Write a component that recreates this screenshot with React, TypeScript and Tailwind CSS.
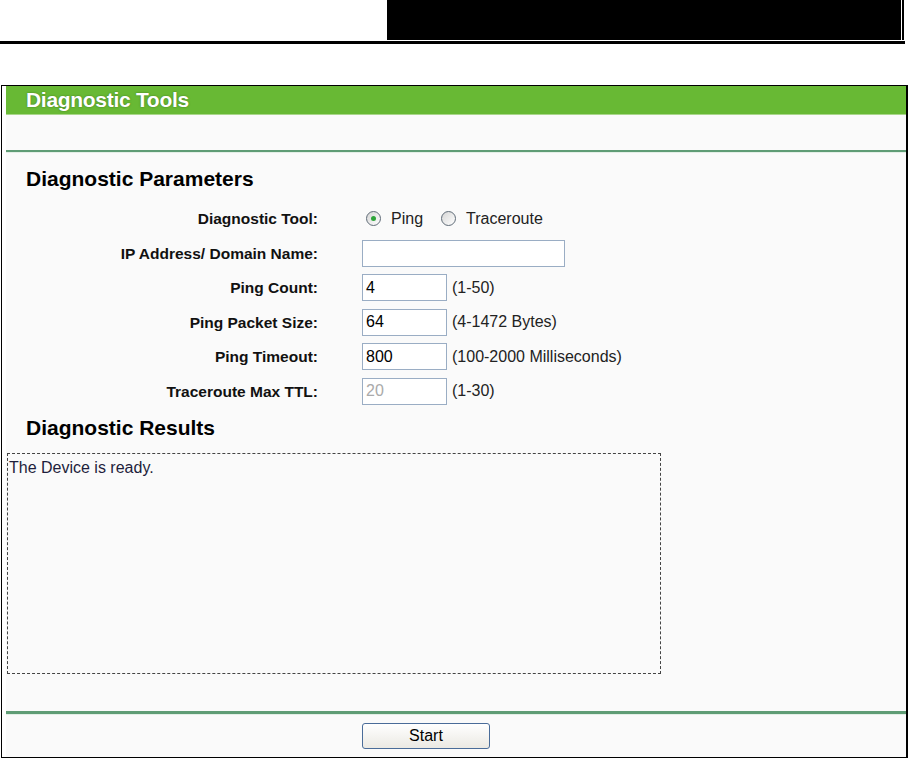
import React from "react";

const font = { fontFamily: '"Liberation Sans", Arial, sans-serif' };

function Radio({ checked, label }: { checked?: boolean; label: string }) {
  return (
    <label className="flex items-center gap-[10px]">
      <span className="w-[15px] h-[15px] rounded-full border border-[#5f6b77] bg-gradient-to-br from-[#d6d6d6] to-[#ffffff] grid place-items-center">
        {checked && <span className="w-[5px] h-[5px] rounded-full bg-[#2ea43a]" />}
      </span>
      <span className="text-[16px] text-[#222]">{label}</span>
    </label>
  );
}

function Field({
  value,
  hint,
  wide,
  disabled,
}: {
  value?: string;
  hint?: string;
  wide?: boolean;
  disabled?: boolean;
}) {
  return (
    <div className="flex items-center gap-[5px]">
      <div
        className={`h-[27px] border border-[#9aadc4] bg-white flex items-center pl-[3px] text-[16px] ${
          wide ? "w-[203px]" : "w-[85px]"
        } ${disabled ? "text-[#aaa]" : "text-black"}`}
      >
        {value}
      </div>
      {hint && <span className="text-[16px] text-[#222]">{hint}</span>}
    </div>
  );
}

const rows: { label: string; body: React.ReactNode }[] = [
  {
    label: "Diagnostic Tool:",
    body: (
      <div className="flex items-center gap-[18px] pl-[4px]">
        <Radio checked label="Ping" />
        <Radio label="Traceroute" />
      </div>
    ),
  },
  { label: "IP Address/ Domain Name:", body: <Field wide /> },
  { label: "Ping Count:", body: <Field value="4" hint="(1-50)" /> },
  { label: "Ping Packet Size:", body: <Field value="64" hint="(4-1472 Bytes)" /> },
  { label: "Ping Timeout:", body: <Field value="800" hint="(100-2000 Milliseconds)" /> },
  { label: "Traceroute Max TTL:", body: <Field value="20" hint="(1-30)" disabled /> },
];

export default function App() {
  return (
    <div className="w-[908px] h-[759px] bg-white overflow-hidden" style={font}>
      {/* page header strip */}
      <div className="flex h-[40px]">
        <div className="w-[387px]" />
        <div className="w-[514px] bg-black" />
        <div className="w-[1px]" />
        <div className="w-[2px] bg-black" />
      </div>
      <div className="mt-[1px] h-[3px] w-[905px] bg-black" />

      {/* panel */}
      <div className="mt-[41px] ml-[1px] w-[907px] h-[673px] border-l border-t border-b border-r-2 border-black pl-[4px] flex">
        <div className="flex-1 bg-[#fafafa] flex flex-col">
          <div className="h-[29px] bg-[#68b934] border-b border-[#a9d68a] flex items-center pl-[20px]">
            <span className="text-white font-bold text-[21px] tracking-[-0.3px] [text-shadow:0_0_2px_rgba(60,110,30,0.9)]">
              Diagnostic Tools
            </span>
          </div>
          <div className="h-[35px]" />
          <div className="h-[2px] bg-[#5f9c75]" />
          <div className="h-px bg-[#e4efe7]" />

          <h2 className="mt-[14px] pl-[20px] text-[21px] leading-[24px] font-bold text-black">
            Diagnostic Parameters
          </h2>
          <div className="mt-[10.5px] grid grid-cols-[312px_1fr] gap-x-[44px]">
            {rows.map((r) => (
              <React.Fragment key={r.label}>
                <div className="h-[34.5px] flex items-center justify-end text-[15.5px] font-bold text-[#111]">
                  {r.label}
                </div>
                <div className="h-[34.5px] flex items-center">{r.body}</div>
              </React.Fragment>
            ))}
          </div>

          <h2 className="mt-[7px] pl-[20px] text-[21px] leading-[24px] font-bold text-black">
            Diagnostic Results
          </h2>
          <div className="mt-[13px] ml-[1px] w-[654px] h-[221px] border border-dashed border-[#444] px-[1px] pt-[2px] text-[16px] text-[#1e1e3c]">
            The Device is ready.
          </div>

          <div className="mt-[37px] h-[3px] bg-[#5f9c75]" />
          <div className="h-px bg-[#e4efe7]" />
          <div className="mt-[8px] pl-[356px] flex">
            <button className="w-[128px] h-[26px] rounded-[3px] border border-[#4a6c99] bg-gradient-to-b from-[#ffffff] to-[#ebe9e3] text-[16px] text-black leading-none">
              Start
            </button>
          </div>
        </div>
      </div>
    </div>
  );
}
